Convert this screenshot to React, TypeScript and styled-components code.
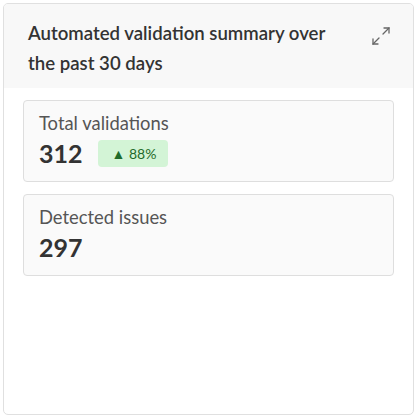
import React from 'react';
import styled, { createGlobalStyle } from 'styled-components';

const GlobalStyle = createGlobalStyle`
  html, body {
    margin: 0;
    padding: 0;
    background: #ffffff;
  }
  body {
    font-family: Lato, "Noto Sans", sans-serif;
    color: #333;
  }
`

const Page = styled.div`
  padding: 3px;
  width: 417px;
  height: 418px;
  box-sizing: border-box;
`

const Panel = styled.div`
  height: 412px;
  box-sizing: border-box;
  border: 1px solid #e0e0e0;
  border-radius: 5px;
  overflow: hidden;
  display: flex;
  flex-direction: column;
  background: #fff;
`

const Header = styled.div`
  background: #f8f8f8;
  display: flex;
  justify-content: space-between;
  align-items: flex-start;
  padding: 14px 22px 10px 24px;
`

const Title = styled.h2`
  margin: 0;
  font-size: 18.6px;
  font-weight: 600;
  line-height: 30px;
  color: #333;
  max-width: 310px;
`

const IconButton = styled.button`
  border: none;
  background: none;
  padding: 0;
  margin-top: 8px;
  width: 20px;
  height: 20px;
  color: #666;
  cursor: pointer;
`

const Body = styled.div`
  display: flex;
  flex-direction: column;
  gap: 12px;
  padding: 12px 19px;
`

const Stat = styled.div`
  border: 1px solid #dedede;
  border-radius: 4px;
  background: #fafafa;
  padding: 10px 15px 13px;
`

const Label = styled.div`
  font-size: 18.4px;
  line-height: 24px;
  color: #555;
`

const ValueRow = styled.div`
  display: flex;
  align-items: center;
  gap: 15px;
  margin-top: 3px;
`

const Value = styled.div`
  font-size: 25px;
  font-weight: 700;
  line-height: 30px;
  color: #333;
`

const Badge = styled.span<{ up?: boolean }>`
  display: inline-flex;
  align-items: center;
  gap: 6px;
  background: ${(props) => (props.up ? '#d3f4d6' : '#fbdada')};
  color: ${(props) => (props.up ? '#1f6b2a' : '#a02020')};
  border-radius: 4px;
  padding: 0 12px 0 14px;
  height: 27px;
  font-size: 14px;
`

const ExpandIcon = () => (
  <svg width="20" height="20" viewBox="0 0 20 20" fill="none" stroke="currentColor" strokeWidth="1.3" strokeLinecap="round">
    <line x1="2" y1="18" x2="8" y2="12" />
    <polyline points="2,13 2,18 7,18" />
    <line x1="12" y1="8" x2="18" y2="2" />
    <polyline points="13,2 18,2 18,7" />
  </svg>
)

type StatItem = {
  label: string;
  value: number;
  change?: string;
}

const STATS: StatItem[] = [
  { label: 'Total validations', value: 312, change: '88%' },
  { label: 'Detected issues', value: 297 },
]

export default function App() {
  return <Page>
    <GlobalStyle />
    <Panel>
      <Header>
        <Title>Automated validation summary over the past 30 days</Title>
        <IconButton aria-label="Expand"><ExpandIcon /></IconButton>
      </Header>
      <Body>
        {
          STATS.map(stat => <Stat key={stat.label}>
            <Label>{stat.label}</Label>
            <ValueRow>
              <Value>{stat.value}</Value>
              {stat.change && <Badge up>▲ {stat.change}</Badge>}
            </ValueRow>
          </Stat>)
        }
      </Body>
    </Panel>
  </Page>
}
